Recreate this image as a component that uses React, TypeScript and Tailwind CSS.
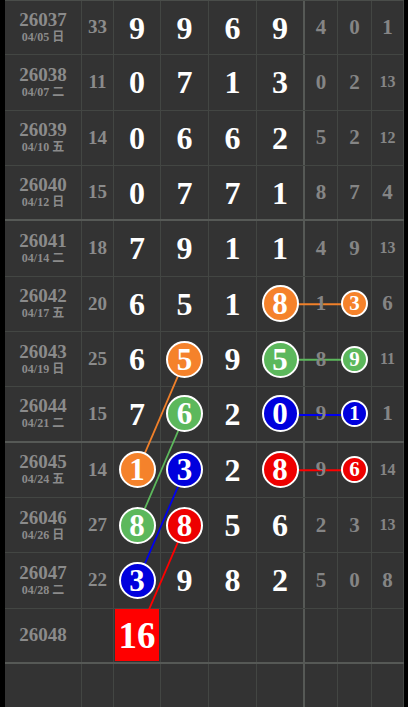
import React from "react";

type Mark = { v: number; c: "o" | "g" | "b" | "r" };
type Val = number | Mark;

interface Row {
  id: string;
  date?: string;
  sum?: number;
  main: Val[];
  right: Val[];
  thick?: boolean;
}

const BG: Record<Mark["c"], string> = {
  o: "bg-[#f5822b]",
  g: "bg-[#5cb85c]",
  b: "bg-[#0000dd]",
  r: "bg-[#ee0000]",
};

const rows: Row[] = [
  { id: "26037", date: "04/05 日", sum: 33, main: [9, 9, 6, 9], right: [4, 0, 1] },
  { id: "26038", date: "04/07 二", sum: 11, main: [0, 7, 1, 3], right: [0, 2, 13] },
  { id: "26039", date: "04/10 五", sum: 14, main: [0, 6, 6, 2], right: [5, 2, 12] },
  { id: "26040", date: "04/12 日", sum: 15, main: [0, 7, 7, 1], right: [8, 7, 4], thick: true },
  { id: "26041", date: "04/14 二", sum: 18, main: [7, 9, 1, 1], right: [4, 9, 13] },
  { id: "26042", date: "04/17 五", sum: 20, main: [6, 5, 1, { v: 8, c: "o" }], right: [1, { v: 3, c: "o" }, 6] },
  { id: "26043", date: "04/19 日", sum: 25, main: [6, { v: 5, c: "o" }, 9, { v: 5, c: "g" }], right: [8, { v: 9, c: "g" }, 11] },
  { id: "26044", date: "04/21 二", sum: 15, main: [7, { v: 6, c: "g" }, 2, { v: 0, c: "b" }], right: [9, { v: 1, c: "b" }, 1], thick: true },
  { id: "26045", date: "04/24 五", sum: 14, main: [{ v: 1, c: "o" }, { v: 3, c: "b" }, 2, { v: 8, c: "r" }], right: [9, { v: 6, c: "r" }, 14] },
  { id: "26046", date: "04/26 日", sum: 27, main: [{ v: 8, c: "g" }, { v: 8, c: "r" }, 5, 6], right: [2, 3, 13] },
  { id: "26047", date: "04/28 二", sum: 22, main: [{ v: 3, c: "b" }, 9, 8, 2], right: [5, 0, 8] },
];

const mainW = ["w-[47px]", "w-[48px]", "w-[48px]", "w-[48px]"];
const rightW = ["w-[33px]", "w-[34px]", "w-[32px]"];

// row centres / column centres used by the trend lines
const ry = (i: number) => 55.33 * i + 27.67;
const cx = { m0: 137.5, m1: 185, m3: 281, r1: 355 };

function MainCell({ v }: { v: Val }) {
  if (typeof v === "number") {
    return <span className="relative text-[32px] font-bold leading-none text-white">{v}</span>;
  }
  return (
    <span
      className={`relative flex h-[37px] w-[37px] items-center justify-center rounded-full border-2 border-white ${BG[v.c]} text-[31px] font-bold leading-none text-white`}
    >
      {v.v}
    </span>
  );
}

function RightCell({ v }: { v: Val }) {
  if (typeof v === "number") {
    return (
      <span className={`relative font-bold leading-none text-[#858585] ${v > 9 ? "text-[16px]" : "text-[21px]"}`}>
        {v}
      </span>
    );
  }
  return (
    <span
      className={`relative flex h-[27px] w-[27px] items-center justify-center rounded-full border-2 border-white ${BG[v.c]} text-[21px] font-bold leading-none text-white`}
    >
      {v.v}
    </span>
  );
}

export default function App() {
  const line = "border-[#434643]";
  const horiz: [number, string][] = [
    [5, "#f0802a"],
    [6, "#5cb85c"],
    [7, "#0000ee"],
    [8, "#ff0000"],
  ];
  const diag: [number, string][] = [
    [6, "#f0802a"],
    [7, "#5cb85c"],
    [8, "#0000ee"],
    [9, "#ff0000"],
  ];

  return (
    <div className="relative h-[707px] w-[408px] overflow-hidden bg-black pl-[5px] font-['Liberation_Serif','Noto_Sans_CJK_SC',serif]">
      <svg className="pointer-events-none absolute inset-0" width="408" height="707" viewBox="0 0 408 707">
        {horiz.map(([i, c]) => (
          <line key={"h" + i} x1={cx.m3} y1={ry(i)} x2={cx.r1} y2={ry(i)} stroke={c} strokeWidth={2} />
        ))}
        {diag.map(([i, c]) => (
          <line key={"d" + i} x1={cx.m1} y1={ry(i)} x2={cx.m0} y2={ry(i + 2)} stroke={c} strokeWidth={1.8} />
        ))}
      </svg>

      <div className="w-[399px] bg-[#333333]">
        {rows.map((r, ri) => (
          <div
            key={r.id}
            className={`flex h-[55.33px] ${ri === 0 ? "border-t border-t-[#4a4d4a]" : ""} ${
              r.thick ? "border-b-2 border-b-[#565956]" : `border-b ${line}`
            }`}
          >
            <div className={`flex w-[77px] flex-col items-center justify-center border-r ${line} font-bold text-[#8b8b8b]`}>
              <span className="text-[19px] leading-[20px]">{r.id}</span>
              <span className="text-[12px] leading-[15px]">{r.date}</span>
            </div>
            <div className={`flex w-[32px] items-center justify-center border-r ${line} text-[19px] font-bold text-[#8b8b8b]`}>
              {r.sum}
            </div>
            {r.main.map((v, i) => (
              <div
                key={i}
                className={`flex ${mainW[i]} items-center justify-center ${i === 3 ? "border-r-2 border-r-[#565956]" : `border-r ${line}`}`}
              >
                <MainCell v={v} />
              </div>
            ))}
            {r.right.map((v, i) => (
              <div key={i} className={`flex ${rightW[i]} items-center justify-center border-r ${line}`}>
                <RightCell v={v} />
              </div>
            ))}
          </div>
        ))}

        <div className="flex h-[55.33px] border-b-2 border-b-[#565956]">
          <div className={`flex w-[77px] items-center justify-center border-r ${line} text-[19px] font-bold text-[#8b8b8b]`}>
            26048
          </div>
          <div className={`w-[32px] border-r ${line}`} />
          <div className={`flex w-[47px] items-center justify-center border-r ${line}`}>
            <span className="relative flex h-[52px] w-[44px] items-center justify-center bg-[#ff0000] text-[37px] font-bold leading-none text-white">
              16
            </span>
          </div>
          <div className={`w-[48px] border-r ${line}`} />
          <div className={`w-[48px] border-r ${line}`} />
          <div className="w-[48px] border-r-2 border-r-[#565956]" />
          <div className={`w-[33px] border-r ${line}`} />
          <div className={`w-[34px] border-r ${line}`} />
          <div className={`w-[32px] border-r ${line}`} />
        </div>

        <div className="flex h-[43px]">
          <div className={`w-[77px] border-r ${line}`} />
          <div className={`w-[32px] border-r ${line}`} />
          <div className={`w-[47px] border-r ${line}`} />
          <div className={`w-[48px] border-r ${line}`} />
          <div className={`w-[48px] border-r ${line}`} />
          <div className="w-[48px] border-r-2 border-r-[#565956]" />
          <div className={`w-[33px] border-r ${line}`} />
          <div className={`w-[34px] border-r ${line}`} />
          <div className={`w-[32px] border-r ${line}`} />
        </div>
      </div>
    </div>
  );
}
